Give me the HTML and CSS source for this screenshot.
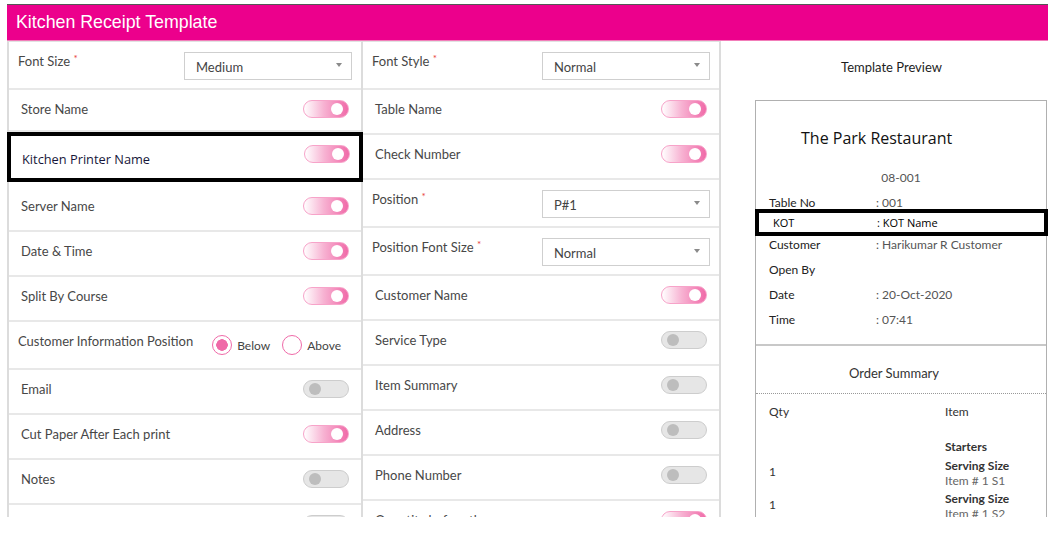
FILE: index.html
```html
<!DOCTYPE html>
<html lang="en">
<head>
    <meta charset="UTF-8">
    <meta name="viewport" content="width=device-width, initial-scale=1.0">
    <title>Kitchen Receipt Template</title>
    <link rel="stylesheet" href="styles.css">
</head>
<body>
    <div class="page">
        <div class="header">Kitchen Receipt Template</div>
        <div class="content">

            <div class="col col-left">
                <div class="row row-select">
                    <span class="lbl">Font Size <span class="req">*</span></span>
                    <div class="select">Medium</div>
                </div>
                <div class="row row-short">
                    <span class="lbl">Store Name</span>
                    <span class="toggle on"></span>
                </div>
                <div class="row row-boxed">
                    <span class="lbl">Kitchen Printer Name</span>
                    <span class="toggle on"></span>
                </div>
                <div class="row row-tall">
                    <span class="lbl">Server Name</span>
                    <span class="toggle on"></span>
                </div>
                <div class="row">
                    <span class="lbl">Date &amp; Time</span>
                    <span class="toggle on"></span>
                </div>
                <div class="row">
                    <span class="lbl">Split By Course</span>
                    <span class="toggle on"></span>
                </div>
                <div class="row row-radio">
                    <span class="lbl">Customer Information Position</span>
                    <div class="radios">
                        <span class="radio checked"><span class="dot"></span>Below</span>
                        <span class="radio"><span class="dot"></span>Above</span>
                    </div>
                </div>
                <div class="row">
                    <span class="lbl">Email</span>
                    <span class="toggle off"></span>
                </div>
                <div class="row">
                    <span class="lbl">Cut Paper After Each print</span>
                    <span class="toggle on"></span>
                </div>
                <div class="row">
                    <span class="lbl">Notes</span>
                    <span class="toggle off"></span>
                </div>
                <div class="row">
                    <span class="lbl"></span>
                    <span class="toggle off"></span>
                </div>
            </div>

            <div class="col col-mid">
                <div class="row row-select">
                    <span class="lbl">Font Style <span class="req">*</span></span>
                    <div class="select">Normal</div>
                </div>
                <div class="row">
                    <span class="lbl">Table Name</span>
                    <span class="toggle on"></span>
                </div>
                <div class="row">
                    <span class="lbl">Check Number</span>
                    <span class="toggle on"></span>
                </div>
                <div class="row row-select">
                    <span class="lbl">Position <span class="req">*</span></span>
                    <div class="select">P#1</div>
                </div>
                <div class="row row-select">
                    <span class="lbl">Position Font Size <span class="req">*</span></span>
                    <div class="select">Normal</div>
                </div>
                <div class="row">
                    <span class="lbl">Customer Name</span>
                    <span class="toggle on"></span>
                </div>
                <div class="row">
                    <span class="lbl">Service Type</span>
                    <span class="toggle off"></span>
                </div>
                <div class="row">
                    <span class="lbl">Item Summary</span>
                    <span class="toggle off"></span>
                </div>
                <div class="row">
                    <span class="lbl">Address</span>
                    <span class="toggle off"></span>
                </div>
                <div class="row">
                    <span class="lbl">Phone Number</span>
                    <span class="toggle off"></span>
                </div>
                <div class="row">
                    <span class="lbl">Quantity before the menu name</span>
                    <span class="toggle on"></span>
                </div>
            </div>

            <div class="col col-right">
                <div class="preview-title">Template Preview</div>
                <div class="preview">
                    <div class="store">The Park Restaurant</div>
                    <div class="check">08-001</div>
                    <div class="info">
                        <div class="info-row"><span class="k">Table No</span><span class="v">: 001</span></div>
                        <div class="info-row kot"><span class="k">KOT</span><span class="v">: KOT Name</span></div>
                        <div class="info-row"><span class="k">Customer</span><span class="v">: Harikumar R Customer</span></div>
                        <div class="info-row"><span class="k">Open By</span><span class="v"></span></div>
                        <div class="info-row"><span class="k">Date</span><span class="v">: 20-Oct-2020</span></div>
                        <div class="info-row"><span class="k">Time</span><span class="v">: 07:41</span></div>
                    </div>
                    <div class="summary-title">Order Summary</div>
                    <div class="items">
                        <div class="head">Qty</div>
                        <div class="head">Item</div>
                        <div></div>
                        <div class="course">Starters</div>
                        <div class="q">1</div>
                        <div class="item">
                            <div class="size">Serving Size</div>
                            <div class="name">Item # 1 S1</div>
                        </div>
                        <div class="q">1</div>
                        <div class="item">
                            <div class="size">Serving Size</div>
                            <div class="name">Item # 1 S2</div>
                        </div>
                    </div>
                </div>
            </div>

        </div>
    </div>
</body>
</html>
```

FILE: styles.css
```css
body {
    margin: 0;
    background: #fff;
    font-family: Lato, "Liberation Sans", sans-serif;
    color: #444;
}
.page {
    margin: 4px 0 0 7px;
    width: 1041px;
}
.header {
    height: 35px;
    border-top: 1px solid #555;
    border-bottom: 1px solid #f27db9;
    background: #ec008c;
    color: #fff;
    font-family: "Liberation Sans", Arial, sans-serif;
    font-size: 17.8px;
    line-height: 34px;
    padding-left: 9px;
}
.content {
    display: grid;
    grid-template-columns: 356px 358px 327px;
    height: 476px;
    overflow: hidden;
}
.col-left {
    border-left: 2px solid #dcdcdc;
    border-right: 2px solid #dcdcdc;
    border-top: 1px solid #e2e2e2;
}
.col-mid {
    border-right: 2px solid #dcdcdc;
    border-top: 1px solid #e2e2e2;
}

/* setting rows */
.row {
    display: flex;
    justify-content: space-between;
    align-items: flex-start;
    height: 45px;
    box-sizing: border-box;
    padding: 10px 12px 0 12px;
    border-bottom: 2px solid #e8e8e8;
}
.lbl {
    font-size: 13px;
    line-height: 18px;
    color: #474747;
    white-space: nowrap;
}
.req {
    color: #e8413b;
    font-size: 10px;
    vertical-align: top;
    line-height: 12px;
}
.row-select {
    height: 48px;
    padding: 10px 9px 0 9px;
}
.row-short {
    height: 42px;
}
.row-tall {
    height: 50px;
    padding-top: 15px;
}
.row-boxed {
    height: 50px;
    border: 4px solid #000;
    margin: 0 -2px;
    padding: 9px 9px 0 11px;
}
.row-boxed .lbl {
    margin-top: 5px;
    font-family: "Open Sans", sans-serif;
    font-size: 12.8px;
    color: #16163a;
}
.row-radio {
    height: 48px;
    padding: 10px 20px 0 9px;
}

.select {
    position: relative;
    width: 168px;
    height: 28px;
    box-sizing: border-box;
    border: 1px solid #cfcfcf;
    background: #fff;
    font-size: 13px;
    line-height: 28px;
    padding-left: 11px;
    color: #444;
}
.select::after {
    content: '';
    position: absolute;
    right: 9px;
    top: 10px;
    border-left: 3px solid transparent;
    border-right: 3px solid transparent;
    border-top: 4px solid #8a8a8a;
}

.toggle {
    position: relative;
    flex: none;
    width: 46px;
    height: 18px;
    box-sizing: border-box;
    border-radius: 9px;
}
.toggle::after {
    content: '';
    position: absolute;
    top: 2px;
    width: 12px;
    height: 12px;
    border-radius: 50%;
}
.toggle.on {
    background: linear-gradient(to right, #fff 0%, #f7b2d2 45%, #f06aa8 100%);
    border: 1px solid #f7a3c9;
}
.toggle.on::after {
    right: 5px;
    background: #fff;
}
.toggle.off {
    background: #e6e6e6;
    border: 1px solid #cdcdcd;
}
.toggle.off::after {
    left: 5px;
    background: #bdbdbd;
}

.radios {
    display: flex;
    align-items: center;
    margin-top: 3px;
    font-size: 12px;
    color: #444;
}
.radio {
    display: flex;
    align-items: center;
    gap: 5px;
}
.radio + .radio {
    margin-left: 12px;
}
.dot {
    width: 20px;
    height: 20px;
    box-sizing: border-box;
    border: 1.5px solid #ef6aa8;
    border-radius: 50%;
    background: #fff;
}
.radio.checked .dot {
    background: radial-gradient(circle, #ef6aa8 0 5.5px, #fff 6px);
}

/* preview */
.col-right {
    padding: 17px 1px 0 0;
}
.preview-title {
    text-align: center;
    padding-left: 15px;
    font-size: 13px;
    line-height: 18px;
    color: #1e1e1e;
    margin-bottom: 24px;
}
.preview {
    margin-left: 34px;
    border: 1px solid #b0b0b0;
    border-bottom: none;
    padding-top: 26px;
    min-height: 500px;
}
.store {
    font-family: "Open Sans", sans-serif;
    font-size: 16px;
    line-height: 22px;
    color: #111;
    padding-left: 45px;
}
.check {
    text-align: center;
    font-size: 12px;
    line-height: 18px;
    margin-top: 20px;
    color: #555;
}
.info {
    margin-top: 3px;
    padding-bottom: 12px;
    border-bottom: 2px solid #c8c8c8;
}
.info-row {
    display: flex;
    height: 25px;
    line-height: 25px;
    font-size: 12px;
    padding-left: 13px;
}
.info-row .k {
    width: 107px;
    color: #222;
}
.info-row .v {
    color: #555;
}
.info-row.kot {
    height: 27px;
    box-sizing: border-box;
    line-height: 19px;
    border: 4px solid #000;
    margin: -6px -2px -4px -1px;
    padding-left: 14px;
    font-family: "Open Sans", sans-serif;
    font-size: 11px;
}
.info-row.kot .k {
    width: 104px;
    color: #000;
}
.info-row.kot .v {
    color: #000;
}
.summary-title {
    text-align: center;
    padding: 18px 14px 11px 0;
    font-size: 13px;
    line-height: 18px;
    color: #333;
    border-bottom: 1px dotted #999;
}
.items {
    display: grid;
    grid-template-columns: 176px 1fr;
    align-items: center;
    padding-left: 13px;
    margin-top: 9px;
    font-size: 12px;
    color: #333;
}
.head {
    line-height: 18px;
}
.course {
    margin-top: 18px;
    line-height: 16px;
    font-weight: 700;
}
.item {
    margin-top: 3px;
    line-height: 15px;
}
.size {
    font-weight: 700;
}
.name {
    color: #666;
}
```
